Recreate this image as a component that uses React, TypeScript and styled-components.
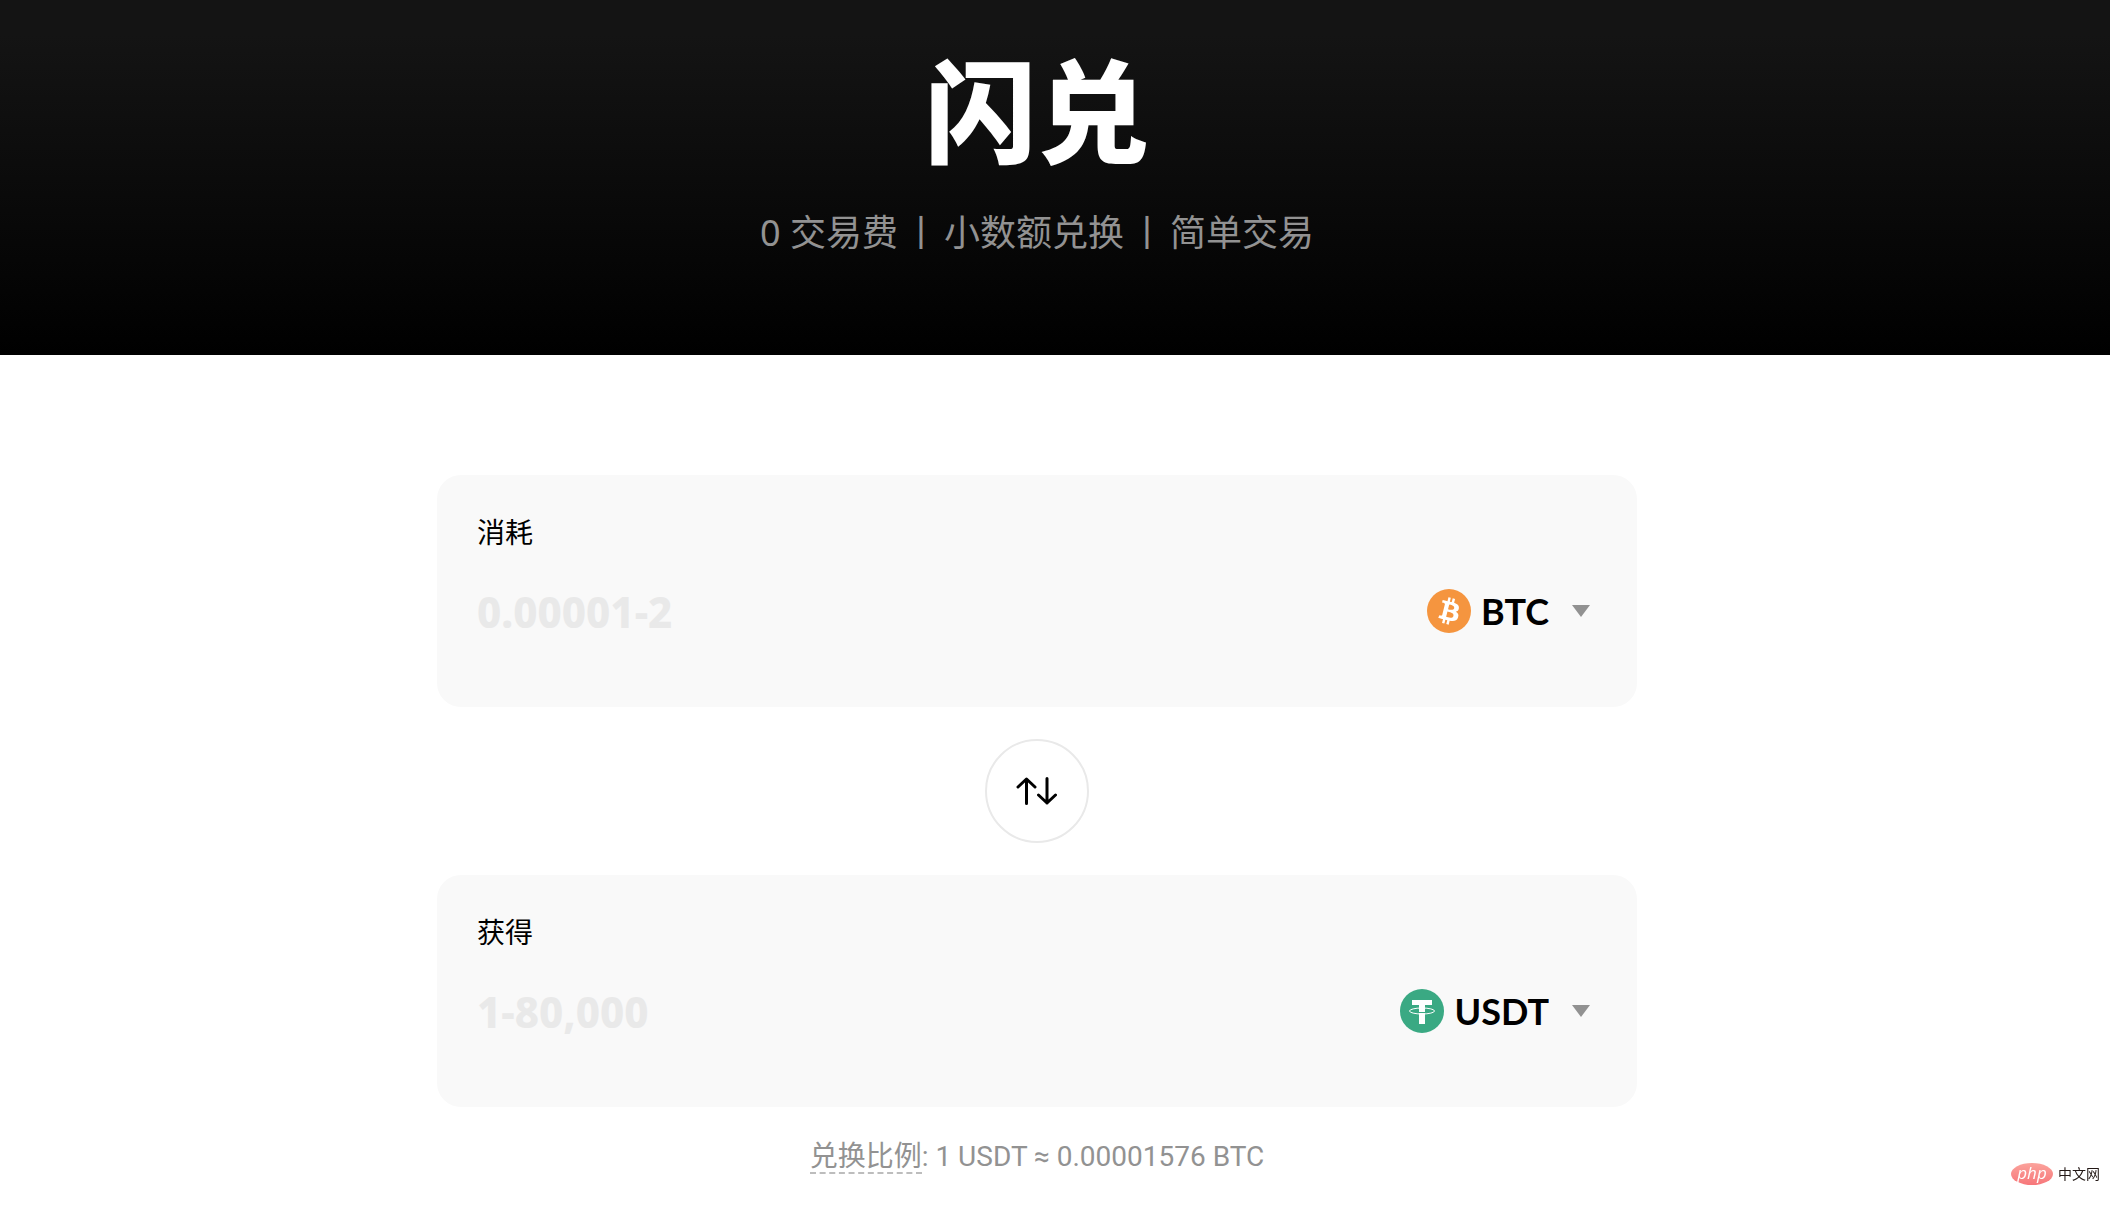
import React, { useState } from 'react';
import styled, { createGlobalStyle } from 'styled-components';

const GlobalStyle = createGlobalStyle`
  *, *::before, *::after { box-sizing: border-box; }
  body {
    margin: 0;
    background: #fff;
    color: #000;
    font-family: "Noto Sans", "Noto Sans CJK SC", sans-serif;
  }
`;

const Page = styled.div`
  min-height: 100vh;
`;

const Hero = styled.header`
  display: flex;
  flex-direction: column;
  align-items: center;
  gap: 25px;
  padding: 44px 36px 94px 0;
  background: linear-gradient(#141414 10%, #000);
`;

const Title = styled.h1`
  margin: 0;
  font-size: 112px;
  line-height: 136px;
  font-weight: 900;
  color: #fff;
`;

const Tagline = styled.p`
  display: flex;
  gap: 5px;
  margin: 0;
  font-size: 36px;
  line-height: 56px;
  color: #929292;
`;

const Exchange = styled.main`
  display: flex;
  flex-direction: column;
  align-items: center;
  gap: 32px;
  padding: 120px 36px 32px 0;
`;

const Card = styled.section`
  display: flex;
  flex-direction: column;
  gap: 31px;
  width: 100%;
  max-width: 1200px;
  padding: 35px 47px 70px 40px;
  border-radius: 24px;
  background: #f9f9f9;
`;

const FieldLabel = styled.label`
  align-self: flex-start;
  font-size: 28px;
  line-height: 44px;
`;

const FieldRow = styled.div`
  display: flex;
  align-items: center;
  gap: 24px;
`;

const AmountInput = styled.input`
  flex: 1;
  min-width: 0;
  height: 52px;
  padding: 0;
  border: 0;
  outline: 0;
  background: transparent;
  font-family: "Noto Sans", sans-serif;
  font-size: 42px;
  font-weight: 800;
  color: #000;
  &::placeholder { color: #e9e9e9; opacity: 1; }
`;

const CoinPicker = styled.div`
  display: flex;
  align-items: center;
  gap: 10px;
`;

const CoinSelect = styled.select`
  field-sizing: content;
  appearance: none;
  padding: 0 13px 0 0;
  border: 0;
  outline: 0;
  background: transparent;
  font-family: Lato, sans-serif;
  font-size: 36px;
  line-height: 52px;
  font-weight: 700;
  color: #000;
  cursor: pointer;
`;

const SwapButton = styled.button`
  display: grid;
  place-items: center;
  width: 104px;
  height: 104px;
  padding: 0;
  border: 2px solid #e9e9e9;
  border-radius: 50%;
  background: #fff;
  cursor: pointer;
`;

const Rate = styled.p`
  margin: 0;
  font-family: Roboto, "Noto Sans CJK SC", sans-serif;
  font-size: 28px;
  line-height: 36px;
  color: #929292;
`;

const RateTerm = styled.span`
  display: inline-block;
  line-height: 30px;
  border-bottom: 2px dashed #bdbdbd;
`;

const SiteMark = styled.a`
  position: fixed;
  right: 10px;
  bottom: 22px;
  display: flex;
  align-items: center;
  gap: 5px;
  font-size: 14px;
  line-height: 22px;
  color: #231815;
  text-decoration: none;
`;

const PhpBadge = styled.span`
  width: 42px;
  height: 22px;
  border-radius: 50%;
  background: linear-gradient(#fba39c, #f7777a);
  font-family: "Open Sans", sans-serif;
  font-size: 17px;
  line-height: 19px;
  font-style: italic;
  text-align: center;
  color: #fff;
`;

const BtcIcon = () => (
  <svg width="44" height="44" viewBox="0 0 32 32" aria-hidden="true">
    <circle cx="16" cy="16" r="16" fill="#f5953f" />
    <path
      fill="#fff"
      d="M23.189 14.02c.314-2.096-1.283-3.223-3.465-3.975l.708-2.84-1.728-.43-.69 2.765c-.454-.114-.92-.22-1.385-.326l.695-2.783L15.596 6l-.708 2.839c-.376-.086-.746-.17-1.104-.26l.002-.009-2.384-.595-.46 1.846s1.283.294 1.256.312c.7.175.826.638.805 1.006l-.806 3.235c.048.012.11.03.18.057l-.183-.045-1.13 4.532c-.086.212-.303.531-.793.41.018.025-1.256-.313-1.256-.313l-.858 1.978 2.25.561c.418.105.828.215 1.231.318l-.715 2.872 1.727.43.708-2.84c.472.127.93.245 1.378.357l-.706 2.828 1.728.43.715-2.866c2.948.558 5.164.333 6.097-2.333.752-2.146-.037-3.385-1.588-4.192 1.13-.26 1.98-1.003 2.207-2.538zm-3.95 5.538c-.533 2.147-4.148.986-5.32.695l.95-3.805c1.172.293 4.929.872 4.37 3.11zm.535-5.569c-.487 1.953-3.495.96-4.47.717l.86-3.45c.975.243 4.118.696 3.61 2.733z"
    />
  </svg>
);

const UsdtIcon = () => (
  <svg width="44" height="44" viewBox="0 0 44 44" aria-hidden="true">
    <circle cx="22" cy="22" r="22" fill="#3aa983" />
    <path d="M12 11h20v5h-7v19h-6V16h-7z" fill="#fff" />
    <ellipse cx="22" cy="22" rx="12.5" ry="3" fill="none" stroke="#fff" strokeWidth="1" />
    <path d="M19 23.500h6" stroke="#3aa983" strokeWidth="1" />
  </svg>
);

const Caret = () => (
  <svg width="18" height="12" viewBox="0 0 18 12" aria-hidden="true">
    <path d="M0 0h18L9 12z" fill="#929292" />
  </svg>
);

const SwapIcon = () => (
  <svg width="42" height="30" viewBox="0 0 42 30" fill="none" stroke="#000" strokeWidth="3" strokeLinecap="round" strokeLinejoin="round" aria-hidden="true">
    <path d="M10.500 27.500V3M2 11l8.500-8L19 11M31 2.500V27M22.500 19l8.500 8 8.500-8" />
  </svg>
);

const coinIcons = { BTC: BtcIcon, USDT: UsdtIcon };
type Coin = keyof typeof coinIcons;

const limits: Record<Coin, string> = { BTC: '0.00001-2', USDT: '1-80,000' };

interface CoinCardProps {
  id: string;
  label: string;
  coin: Coin;
  onCoinChange: (coin: Coin) => void;
}

function CoinCard({ id, label, coin, onCoinChange }: CoinCardProps) {
  const Icon = coinIcons[coin];
  return (
    <Card>
      <FieldLabel htmlFor={id}>{label}</FieldLabel>
      <FieldRow>
        <AmountInput id={id} inputMode="decimal" placeholder={limits[coin]} />
        <CoinPicker>
          <Icon />
          <CoinSelect aria-label={label} value={coin} onChange={(e) => onCoinChange(e.target.value as Coin)}>
            <option value="BTC">BTC</option>
            <option value="USDT">USDT</option>
          </CoinSelect>
          <Caret />
        </CoinPicker>
      </FieldRow>
    </Card>
  );
}

export default function App() {
  const [from, setFrom] = useState<Coin>('BTC');
  const to: Coin = from === 'BTC' ? 'USDT' : 'BTC';

  return (
    <Page lang="zh-CN">
      <GlobalStyle />
      <Hero>
        <Title>闪兑</Title>
        <Tagline>
          <span>0 交易费</span>
          <span>丨</span>
          <span>小数额兑换</span>
          <span>丨</span>
          <span>简单交易</span>
        </Tagline>
      </Hero>
      <Exchange>
        <CoinCard id="spend" label="消耗" coin={from} onCoinChange={setFrom} />
        <SwapButton type="button" aria-label="兑换" onClick={() => setFrom(to)}>
          <SwapIcon />
        </SwapButton>
        <CoinCard id="receive" label="获得" coin={to} onCoinChange={(c) => setFrom(c === 'BTC' ? 'USDT' : 'BTC')} />
        <Rate>
          <RateTerm>兑换比例</RateTerm>: 1 USDT ≈ 0.00001576 BTC
        </Rate>
      </Exchange>
      <SiteMark href="#">
        <PhpBadge>php</PhpBadge>
        <span>中文网</span>
      </SiteMark>
    </Page>
  );
}
